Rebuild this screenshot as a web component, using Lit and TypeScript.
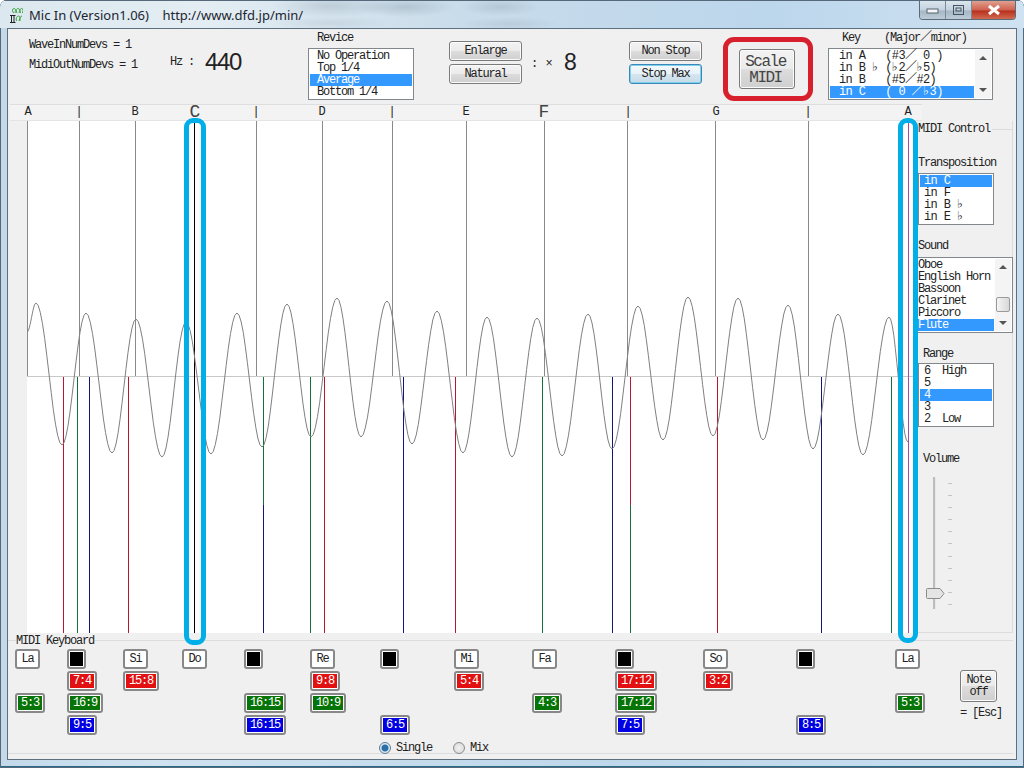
import { LitElement, html, css, svg } from "lit";
import { customElement } from "lit/decorators.js";

// where the note markers sit, in page x. plot starts at x=27, y=121
const PLOT_X = 27;
const PLOT_Y = 121;
const AXIS = 376;
const SPLIT = 505;
const BOTTOM = 633;

const rulerMarks = [
  { x: 28, t: "A" }, { x: 79, t: "|" }, { x: 135, t: "B" }, { x: 195, t: "C", big: true },
  { x: 256, t: "|" }, { x: 322, t: "D" }, { x: 392, t: "|" }, { x: 466, t: "E" },
  { x: 544, t: "F", big: true }, { x: 628, t: "|" }, { x: 716, t: "G" }, { x: 808, t: "|" },
  { x: 908, t: "A" },
];

const grayLines = [27, 79, 135, 256, 322, 392, 466, 544, 627, 715, 808];

const RED = "#b5182f";
const GREEN = "#12703a";
const BLUE = "#14147e";

const noteLines = [
  [63, RED], [77, GREEN], [89, BLUE], [128, RED], [263, GREEN, BLUE], [310, GREEN],
  [324, RED], [403, BLUE], [455, RED], [542, GREEN], [612, BLUE], [630, RED, GREEN],
  [717, RED], [821, BLUE], [891, GREEN],
] as [number, string, string?][];

// peaks and troughs of the wave read off the picture
const extremes = [
  [27, 332], [36, 303], [62, 445], [86, 313], [112, 453], [136, 319], [162, 457], [186, 322],
  [211, 454], [237, 313], [262, 447], [287, 304], [311, 437], [337, 298], [361, 437], [387, 301],
  [412, 444], [437, 311], [463, 453], [487, 317], [512, 457], [537, 318], [562, 456], [588, 314],
  [612, 449], [638, 306], [663, 440], [688, 297], [713, 436], [738, 298], [763, 440], [788, 305],
  [813, 449], [838, 314], [863, 455], [889, 317], [908, 442],
];

function wavePath() {
  const pts: string[] = [];
  for (let i = 0; i < extremes.length - 1; i++) {
    const [x0, y0] = extremes[i];
    const [x1, y1] = extremes[i + 1];
    for (let s = 0; s < 12; s++) {
      const t = s / 12;
      const y = y0 + ((y1 - y0) * (1 - Math.cos(Math.PI * t))) / 2;
      pts.push(`${(x0 + (x1 - x0) * t - PLOT_X).toFixed(1)},${(y - PLOT_Y).toFixed(1)}`);
    }
  }
  const last = extremes[extremes.length - 1];
  pts.push(`${last[0] - PLOT_X},${last[1] - PLOT_Y}`);
  return pts.join(" ");
}

const keys = [
  { n: "La", g: "5:3", w: 52 },
  { r: "7:4", g: "16:9", b: "9:5", w: 56 },
  { n: "Si", r: "15:8", w: 59 },
  { n: "Do", w: 62 },
  { g: "16:15", b: "16:15", w: 66 },
  { n: "Re", r: "9:8", g: "10:9", w: 70 },
  { b: "6:5", w: 74 },
  { n: "Mi", r: "5:4", w: 78 },
  { n: "Fa", g: "4:3", w: 83 },
  { r: "17:12", g: "17:12", b: "7:5", w: 88 },
  { n: "So", r: "3:2", w: 93 },
  { b: "8:5", w: 99 },
  { n: "La", g: "5:3", w: 65 },
] as { n?: string; r?: string; g?: string; b?: string; w: number }[];

@customElement("app-root")
export class AppRoot extends LitElement {
  static styles = css`
    :host {
      display: block;
      width: 1024px;
      height: 768px;
      font-family: "Liberation Mono", "DejaVu Sans Mono", "Noto Sans CJK JP", monospace;
      font-size: 12px;
      line-height: 12px;
      letter-spacing: -1.2px;
      color: #222;
    }

    /*============================window frame================================*/
    .window {
      position: relative;
      width: 1024px;
      height: 768px;
      box-sizing: border-box;
      padding: 0 7px 8px;
      display: flex;
      flex-direction: column;
      overflow: hidden;
      border-radius: 7px 7px 0 0;
      background: linear-gradient(90deg, #c3d9ea, #cfe2f0 15%, #bed7ea 60%, #c9dff0);
      box-shadow: inset 0 0 0 1px #56697a, inset 0 -1px 0 1px #2a6a86;
    }

    .titlebar {
      height: 28px;
      margin: 0 -7px;
      padding-left: 10px;
      display: flex;
      align-items: center;
      gap: 6px;
      flex: none;
      border-top: 1px solid #56697a;
      box-sizing: border-box;
      background:
        radial-gradient(ellipse 60px 12px at 330px 5px, rgba(90, 110, 130, 0.2), transparent),
        radial-gradient(ellipse 50px 10px at 405px 6px, rgba(90, 110, 130, 0.24), transparent),
        radial-gradient(ellipse 40px 9px at 500px 6px, rgba(100, 120, 140, 0.2), transparent),
        radial-gradient(ellipse 60px 7px at 330px 22px, rgba(120, 140, 160, 0.16), transparent),
        radial-gradient(ellipse 50px 7px at 510px 23px, rgba(120, 140, 160, 0.18), transparent),
        linear-gradient(90deg, #dce8ef, #e3edf3 20%, #c9dcea 45%, #bcd6ec 75%, #cfe2f1);
    }

    .title {
      font-family: "Noto Sans", sans-serif;
      font-size: 13px;
      letter-spacing: 0;
      color: #1c2530;
      white-space: pre;
    }

    .caption {
      position: absolute;
      top: 1px;
      right: 8px;
      height: 18px;
      display: flex;
      border: 1px solid #5c6b78;
      border-top: none;
      border-radius: 0 0 4px 4px;
      overflow: hidden;
    }

    .cap {
      width: 25px;
      background: linear-gradient(#dbe5ec, #c3d2de 50%, #a6b8c6 55%, #bccbd6);
      border-right: 1px solid #7c8b98;
      display: flex;
      align-items: center;
      justify-content: center;
    }

    .cap_close {
      width: 43px;
      border-right: none;
      background: linear-gradient(#e0a090, #d0604e 50%, #b8301e 55%, #d06a50);
    }

    .client {
      flex: 1;
      border: 1px solid #5e6f7e;
      background: #f0f0f0;
      display: flex;
      flex-direction: column;
      min-height: 0;
    }

    /*============================top controls================================*/
    .top {
      height: 75px;
      flex: none;
      box-sizing: border-box;
      padding-left: 21px;
      display: grid;
      grid-template-columns: 141px 138px 141px 180px 110px 89px 165px;
    }

    .devs {
      padding-top: 10px;
      display: flex;
      flex-direction: column;
      gap: 8px;
    }

    .hz {
      padding-top: 21px;
      display: flex;
      align-items: center;
      height: 24px;
    }

    .hz_value {
      margin-left: 11px;
      font-family: "Liberation Sans", sans-serif;
      font-size: 24px;
      line-height: 24px;
      letter-spacing: -1.4px;
    }

    .caption_label {
      height: 12px;
      margin: 3px 0 4px 9px;
      white-space: pre;
    }

    .zoom {
      padding-top: 12px;
      display: flex;
      align-items: flex-start;
    }

    .stack {
      display: flex;
      flex-direction: column;
      gap: 3px;
    }

    .btn {
      width: 73px;
      height: 20px;
      box-sizing: border-box;
      padding: 0;
      font: inherit;
      letter-spacing: inherit;
      color: #222;
      border: 1px solid #7a7a7a;
      border-radius: 3px;
      background: linear-gradient(#f3f3f3, #ebebeb 48%, #dcdcdc 52%, #cfcfcf);
      box-shadow: inset 0 0 0 1px #fbfbfb;
    }

    .btn_focus {
      border-color: #3d87b8;
      box-shadow: inset 0 0 0 1px #7ed0ef;
      background: linear-gradient(#f3f9fc, #e8f2f8 48%, #d5e6f0 52%, #c6dae6);
    }

    .times {
      margin: 17px 0 0 9px;
      letter-spacing: 0;
      width: 33px;
      flex: none;
      white-space: pre;
    }

    .factor {
      margin: 10px 0 0 0;
      font-family: "Liberation Sans", sans-serif;
      font-size: 23px;
      line-height: 22px;
      letter-spacing: 0;
    }

    .scale {
      width: 56px;
      height: 40px;
      margin-top: 20px;
      padding: 2px 3px 0 0;
      font-size: 16px;
      line-height: 16px;
      letter-spacing: -1.5px;
      color: #444;
    }

    /*============================list boxes==================================*/
    .list {
      box-sizing: border-box;
      border: 1px solid #82878c;
      background: #fff;
      padding: 1px;
      display: flex;
    }

    .items {
      flex: 1;
      min-width: 0;
    }

    .item {
      height: 12px;
      line-height: 12px;
      white-space: pre;
    }

    .item_sel {
      background: #3399ff;
      color: #fff;
    }

    .wide {
      font-size: 12px;
      letter-spacing: -0.6px;
    }

    .flat {
      font-family: "DejaVu Sans", sans-serif;
      font-size: 12px;
      line-height: 10px;
      letter-spacing: 0;
      display: inline-block;
      width: 6.6px;
    }

    .revice {
      width: 106px;
      height: 52px;
    }

    .revice .item,
    .key .item {
      padding-left: 7px;
    }

    .key {
      width: 165px;
      height: 52px;
    }

    .key .item {
      padding-left: 9px;
    }

    .key_label {
      margin-left: 14px;
    }

    .scrollbar {
      width: 16px;
      flex: none;
      margin-left: 1px;
      display: flex;
      flex-direction: column;
      align-items: center;
      justify-content: space-between;
      padding: 6px 0;
      box-sizing: border-box;
      background: #f4f4f4;
    }

    .arrow_up,
    .arrow_down {
      width: 0;
      height: 0;
      border-left: 4px solid transparent;
      border-right: 4px solid transparent;
    }

    .arrow_up {
      border-bottom: 4px solid #555;
    }

    .arrow_down {
      border-top: 4px solid #555;
    }

    .thumb {
      width: 14px;
      height: 15px;
      margin-top: 18px;
      border: 1px solid #9a9a9a;
      border-radius: 2px;
      box-sizing: border-box;
      background: linear-gradient(90deg, #f4f4f4, #d8d8d8);
    }

    /*============================ruler and plot==============================*/
    .ruler {
      position: relative;
      height: 17px;
      width: 912px;
      margin-left: 2px;
      flex: none;
      box-sizing: border-box;
      border-top: 1px solid #dedede;
      border-bottom: 1px solid #e4e4e4;
      background: #f3f3f3;
    }

    .mark {
      position: absolute;
      top: 1px;
      line-height: 13px;
      transform: translateX(-50%);
      letter-spacing: 0;
    }

    .mark_big {
      top: -1px;
      font-size: 18px;
      line-height: 16px;
      color: #444;
    }

    .middle {
      height: 512px;
      flex: none;
      display: flex;
    }

    .plot {
      width: 888px;
      height: 512px;
      margin-left: 19px;
      flex: none;
      background: #fff;
      display: block;
    }

    /*============================right column================================*/
    .side {
      width: 97px;
      margin-left: 1px;
      flex: none;
      box-sizing: border-box;
      border-right: 1px solid #dcdcdc;
      border-bottom: 1px solid #dcdcdc;
      display: flex;
      flex-direction: column;
      align-items: flex-start;
    }

    .legend {
      width: 100%;
      margin-top: 2px;
      padding-left: 2px;
      box-sizing: border-box;
      display: flex;
      align-items: center;
      height: 12px;
    }

    .legend::after {
      content: "";
      flex: 1;
      margin-left: 2px;
      border-top: 1px solid #dcdcdc;
    }

    .side_label {
      height: 12px;
      margin-left: 2px;
    }

    .mt22 {
      margin-top: 22px;
    }

    .mt15 {
      margin-top: 15px;
    }

    .range_label {
      margin-left: 7px;
    }

    .trans {
      width: 76px;
      height: 52px;
      margin: 4px 0 0 2px;
    }

    .trans .item {
      padding-left: 4px;
    }

    .sound {
      width: 97px;
      height: 76px;
      margin-top: 5px;
    }

    .range {
      width: 76px;
      height: 64px;
      margin: 3px 0 0 2px;
    }

    .range .item {
      padding-left: 4px;
    }

    .volume_label {
      margin-top: 26px;
    }

    .slider {
      position: relative;
      margin: 12px 0 0 17px;
      height: 132px;
      display: flex;
    }

    .track {
      width: 2px;
      height: 132px;
      background: #bdbdbd;
      border-right: 1px solid #e8e8e8;
    }

    .ticks {
      margin: 6px 0 4px 12px;
      display: flex;
      flex-direction: column;
      justify-content: space-between;
    }

    .tick {
      width: 4px;
      height: 1px;
      background: #c4c4c4;
    }

    .slider_thumb {
      position: absolute;
      left: -7px;
      top: 111px;
    }

    /*============================keyboard====================================*/
    .keyboard {
      margin-top: 7px;
      width: 1005px;
      border-top: 1px solid #dcdcdc;
      border-bottom: 1px solid #dcdcdc;
      flex: none;
      height: 114px;
      box-sizing: border-box;
    }

    .keyboard_label {
      display: table;
      margin: -6px 0 0 8px;
      height: 12px;
      background: #f0f0f0;
    }

    .keys {
      margin-top: 2px;
      padding-left: 7px;
      display: grid;
      grid-auto-flow: column;
      grid-template-rows: repeat(4, 20px);
      row-gap: 2px;
      justify-content: start;
    }

    .key_white {
      width: 25px;
      height: 20px;
      box-sizing: border-box;
      border: 2px solid #888;
      border-radius: 3px;
      background: #fff;
      text-align: center;
      line-height: 16px;
    }

    .key_black {
      width: 19px;
      height: 20px;
      box-sizing: border-box;
      border: 2px solid #888;
      border-radius: 3px;
      padding: 1px;
      background: #fff;
    }

    .key_black div {
      width: 100%;
      height: 100%;
      background: #000;
    }

    .chip {
      display: inline-block;
      height: 20px;
      box-sizing: border-box;
      border: 2px solid #888;
      border-radius: 3px;
      padding: 1px;
      background: #fff;
    }

    .chip span {
      display: block;
      height: 14px;
      padding: 0 3px;
      line-height: 14px;
      color: #fff;
    }

    .red {
      background: #e21010;
    }

    .green {
      background: #067406;
    }

    .blue {
      background: #0000e2;
    }

    .note {
      grid-column: 14;
      grid-row: 2 / span 3;
      margin-top: -1px;
      display: flex;
      flex-direction: column;
      align-items: flex-start;
      gap: 5px;
    }

    .note_btn {
      width: 37px;
      height: 32px;
      white-space: pre;
    }

    .radios {
      margin-top: 6px;
      padding-left: 371px;
      display: flex;
      align-items: center;
      height: 13px;
    }

    .radio {
      width: 12px;
      height: 12px;
      box-sizing: border-box;
      border-radius: 50%;
      border: 1px solid #8d8d8d;
      background: radial-gradient(circle, #f2f2f2, #d4d4d4);
      margin-right: 5px;
    }

    .radio_on {
      background: radial-gradient(circle, #2a6fa8 0 3px, #dfe9f0 4px);
      border-color: #5b7c98;
    }

    .mix {
      margin-left: 21px;
    }

    /*============================pen annotations=============================*/
    .ring {
      position: absolute;
      box-sizing: border-box;
      pointer-events: none;
    }

    .ring_scale {
      left: 723px;
      top: 37px;
      width: 90px;
      height: 64px;
      border: 5px solid #d81f2e;
      border-radius: 11px;
    }

    .ring_do {
      left: 184px;
      top: 118px;
      width: 22px;
      height: 527px;
      border: 5px solid #00aee8;
      border-radius: 9px;
    }

    .ring_la {
      left: 898px;
      top: 118px;
      width: 20px;
      height: 525px;
      border: 5px solid #00aee8;
      border-radius: 9px;
    }
  `;

  // the flat sign needs its own font, the mono one draws it too small
  itemText(t: string) {
    return t.split(/(♭)/).map((part) => (part === "♭" ? html`<span class="flat">♭</span>` : part));
  }

  listBox(cls: string, items: string[], sel: number) {
    return html`
      <div class="items">
        ${items.map(
          (t, i) => html`<div class="item ${i === sel ? "item_sel" : ""} ${cls}">${this.itemText(t)}</div>`
        )}
      </div>
    `;
  }

  plot() {
    return html`
      <svg class="plot" viewBox="0 0 888 512" width="888" height="512">
        ${grayLines.map(
          (x) => svg`<line x1=${x - PLOT_X + 0.5} x2=${x - PLOT_X + 0.5} y1="0" y2=${AXIS - PLOT_Y} stroke="#8a8a8a" />`
        )}
        <line x1="0" x2="888" y1=${AXIS - PLOT_Y + 0.5} y2=${AXIS - PLOT_Y + 0.5} stroke="#c8c8c8" />
        <line x1="167.5" x2="167.5" y1="0" y2=${BOTTOM - PLOT_Y} stroke="#000" />
        <line x1="881.5" x2="881.5" y1="0" y2=${BOTTOM - PLOT_Y} stroke="#a848a8" />
        ${noteLines.map(([x, top, low]) => {
          const lx = x - PLOT_X + 0.5;
          if (!low) {
            return svg`<line x1=${lx} x2=${lx} y1=${AXIS - PLOT_Y + 1} y2=${BOTTOM - PLOT_Y} stroke=${top} />`;
          }
          return svg`
            <line x1=${lx} x2=${lx} y1=${AXIS - PLOT_Y + 1} y2=${SPLIT - PLOT_Y} stroke=${top} />
            <line x1=${lx} x2=${lx} y1=${SPLIT - PLOT_Y} y2=${BOTTOM - PLOT_Y} stroke=${low} />
          `;
        })}
        <polyline points=${wavePath()} fill="none" stroke="#808080" stroke-width="1" />
      </svg>
    `;
  }

  chip(text: string | undefined, color: string) {
    if (!text) return html`<div></div>`;
    return html`<div><div class="chip"><span class=${color}>${text}</span></div></div>`;
  }

  render() {
    return html`
      <div class="window">
        <div class="titlebar">
          <svg width="13" height="16" viewBox="0 0 13 16">
            <path d="M3.500 6C1.500 3 3 1 4.500 1.500S5.500 4 5 6M7 6C5.500 3 7 1 8.500 1.500S9.500 4 9 6M10.500 6C9.500 3 10.500 1 12 1.500S13 4 12.500 6M6.500 14c-1-3 .500-5 2-5s2 2 .500 5M10 14c-.500-3 .500-5 2-5" fill="none" stroke="#3fa03f" />
            <path d="M0 8.500h5.500M0 15.500h5.500M1.500 8.500v7M4 8.500v7" fill="none" stroke="#222" />
          </svg>
          <span class="title">Mic In (Version1.06)    http://www.dfd.jp/min/</span>
        </div>
        <div class="caption">
          <div class="cap">
            <svg width="13" height="7"><rect x="1" y="2" width="11" height="4" fill="#f4f6f8" stroke="#56646f" /></svg>
          </div>
          <div class="cap">
            <svg width="11" height="10"><rect x="0.500" y="0.500" width="10" height="9" fill="none" stroke="#46545f" /><rect x="3" y="3" width="5" height="3" fill="none" stroke="#46545f" /></svg>
          </div>
          <div class="cap cap_close">
            <svg width="14" height="12"><path d="M2 2l10 8M12 2L2 10" stroke="#fff" stroke-width="3" /></svg>
          </div>
        </div>

        <div class="client">
          <div class="top">
            <div class="devs">
              <div>WaveInNumDevs = 1</div>
              <div>MidiOutNumDevs = 1</div>
            </div>
            <div class="hz">
              <span>Hz :</span>
              <span class="hz_value">440</span>
            </div>
            <div>
              <div class="caption_label">Revice</div>
              <div class="list revice">
                ${this.listBox("", ["No Operation", "Top 1/4", "Average", "Bottom 1/4"], 2)}
              </div>
            </div>
            <div class="zoom">
              <div class="stack">
                <button class="btn">Enlarge</button>
                <button class="btn">Natural</button>
              </div>
              <span class="times">: ×</span>
              <span class="factor">8</span>
            </div>
            <div class="zoom">
              <div class="stack">
                <button class="btn">Non Stop</button>
                <button class="btn btn_focus">Stop Max</button>
              </div>
            </div>
            <div>
              <button class="btn scale">Scale<br />MIDI</button>
            </div>
            <div>
              <div class="caption_label key_label">Key    (Major／minor)</div>
              <div class="list key">
                ${this.listBox(
                  "wide",
                  ["in A   (#3／ 0 )", "in B ♭ (♭2／♭5)", "in B   (#5／#2)", "in C   ( 0 ／♭3)"],
                  3
                )}
                <div class="scrollbar"><div class="arrow_up"></div><div class="arrow_down"></div></div>
              </div>
            </div>
          </div>

          <div class="ruler">
            ${rulerMarks.map(
              (m) => html`<span class="mark ${m.big ? "mark_big" : ""}" style="left:${m.x - 10}px">${m.t}</span>`
            )}
          </div>

          <div class="middle">
            ${this.plot()}
            <div class="side">
              <div class="legend">MIDI Control</div>
              <div class="side_label mt22">Transposition</div>
              <div class="list trans">
                ${this.listBox("wide", ["in C", "in F", "in B ♭", "in E ♭"], 0)}
              </div>
              <div class="side_label mt15">Sound</div>
              <div class="list sound">
                ${this.listBox("", ["Oboe", "English Horn", "Bassoon", "Clarinet", "Piccoro", "Flute"], 5)}
                <div class="scrollbar">
                  <div class="arrow_up"></div>
                  <div class="thumb"></div>
                  <div class="arrow_down"></div>
                </div>
              </div>
              <div class="side_label range_label mt15">Range</div>
              <div class="list range">
                ${this.listBox("", ["6  High", "5", "4", "3", "2  Low"], 2)}
              </div>
              <div class="side_label range_label volume_label">Volume</div>
              <div class="slider">
                <div class="track"></div>
                <div class="ticks">
                  ${Array.from({ length: 11 }, () => html`<div class="tick"></div>`)}
                </div>
                <svg class="slider_thumb" width="19" height="11" viewBox="0 0 19 11">
                  <path d="M1.500 .5H14L18 5.500 14 10.500H1.500a1 1 0 0 1-1-1V1.500a1 1 0 0 1 1-1z" fill="#e4e4e4" stroke="#8a8a8a" />
                </svg>
              </div>
            </div>
          </div>

          <div class="keyboard">
            <div class="keyboard_label">MIDI Keyboard</div>
            <div class="keys" style="grid-template-columns:${keys.map((k) => k.w + "px").join(" ")} 60px">
              ${keys.map(
                (k) => html`
                  ${k.n
                    ? html`<div><div class="key_white">${k.n}</div></div>`
                    : html`<div><div class="key_black"><div></div></div></div>`}
                  ${this.chip(k.r, "red")} ${this.chip(k.g, "green")} ${this.chip(k.b, "blue")}
                `
              )}
              <div class="note">
                <button class="btn note_btn">Note
off</button>
                <span>= [Esc]</span>
              </div>
            </div>
            <div class="radios">
              <div class="radio radio_on"></div>
              <span>Single</span>
              <div class="radio mix"></div>
              <span>Mix</span>
            </div>
          </div>
        </div>

        <div class="ring ring_scale"></div>
        <div class="ring ring_do"></div>
        <div class="ring ring_la"></div>
      </div>
    `;
  }
}
